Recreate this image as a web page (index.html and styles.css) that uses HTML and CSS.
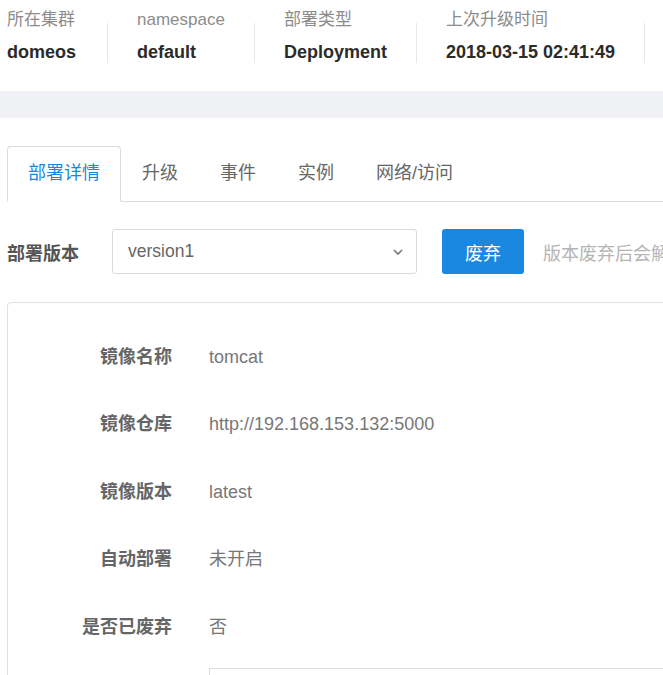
FILE: index.html
```html
<!DOCTYPE html>
<html lang="zh">
<head>
<meta charset="utf-8">
<title>部署详情</title>
<link rel="stylesheet" href="styles.css">
</head>
<body>
<div class="page">
  <div class="summary">
    <div class="stat">
      <div class="stat-label">所在集群</div>
      <div class="stat-value">domeos</div>
    </div>
    <span class="divider"></span>
    <div class="stat">
      <div class="stat-label">namespace</div>
      <div class="stat-value">default</div>
    </div>
    <span class="divider"></span>
    <div class="stat">
      <div class="stat-label">部署类型</div>
      <div class="stat-value">Deployment</div>
    </div>
    <span class="divider"></span>
    <div class="stat">
      <div class="stat-label">上次升级时间</div>
      <div class="stat-value">2018-03-15 02:41:49</div>
    </div>
    <span class="divider"></span>
  </div>

  <div class="band"></div>

  <div class="tabs">
    <div class="tab active">部署详情</div>
    <div class="tab">升级</div>
    <div class="tab">事件</div>
    <div class="tab">实例</div>
    <div class="tab">网络/访问</div>
  </div>

  <div class="version-row">
    <span class="version-label">部署版本</span>
    <div class="select">
      <span class="select-text">version1</span>
      <svg class="chevron" width="12" height="8" viewBox="0 0 12 8"><path d="M2 2 L6 6 L10 2" fill="none" stroke="#777" stroke-width="1.6"/></svg>
    </div>
    <button class="btn-primary">废弃</button>
    <span class="hint">版本废弃后会解除关联</span>
  </div>

  <div class="card">
    <div class="row"><span class="row-label">镜像名称</span><span class="row-value">tomcat</span></div>
    <div class="row"><span class="row-label">镜像仓库</span><span class="row-value">http://192.168.153.132:5000</span></div>
    <div class="row"><span class="row-label">镜像版本</span><span class="row-value">latest</span></div>
    <div class="row"><span class="row-label">自动部署</span><span class="row-value">未开启</span></div>
    <div class="row"><span class="row-label">是否已废弃</span><span class="row-value">否</span></div>
    <div class="box-row"><div class="box"></div></div>
  </div>
</div>
</body>
</html>
```

FILE: styles.css
```css
html, body {
  margin: 0;
  padding: 0;
  background: #fff;
  overflow: hidden;
}
body {
  font-family: "Liberation Sans", "Noto Sans CJK SC", sans-serif;
  font-size: 18px;
  color: #333;
}
.page {
  width: 663px;
  height: 675px;
  overflow: hidden;
}
.summary {
  display: flex;
  align-items: flex-start;
  padding: 8px 0 0 7px;
  height: 91px;
  box-sizing: border-box;
}
.stat {
  padding: 0 29px 0 29px;
}
.stat:first-child {
  padding: 0 31px 0 0;
}
.stat-label {
  color: #8c8c8c;
  font-size: 17px;
  line-height: 24px;
}
.stat-value {
  font-weight: bold;
  color: #2b2b2b;
  font-size: 18px;
  line-height: 24px;
  margin-top: 8px;
}
.divider {
  width: 1px;
  height: 40px;
  margin-top: 15px;
  background: #e6e6e6;
  flex: none;
}
.band {
  height: 27px;
  background: #f0f1f5;
}
.tabs {
  display: flex;
  margin: 28px 0 0 7px;
  border-bottom: 1px solid #dcdcdc;
  height: 55px;
}
.tab {
  padding: 0 21px;
  line-height: 55px;
  color: #666;
  font-size: 18px;
  height: 55px;
  box-sizing: border-box;
}
.tab.active {
  color: #1a87e0;
  border: 1px solid #dcdcdc;
  border-bottom: 1px solid #fff;
  border-radius: 4px 4px 0 0;
  background: #fff;
  height: 56px;
  line-height: 53px;
  padding: 0 20px;
}
.version-row {
  display: flex;
  align-items: center;
  margin: 27px 0 0 7px;
  height: 45px;
  white-space: nowrap;
}
.version-label {
  font-weight: bold;
  color: #555;
  width: 105px;
  flex: none;
}
.select {
  width: 305px;
  height: 45px;
  box-sizing: border-box;
  border: 1px solid #dadada;
  border-radius: 3px;
  display: flex;
  align-items: center;
  justify-content: space-between;
  padding: 0 12px 0 15px;
  flex: none;
  color: #666;
  font-size: 17.5px;
}
.chevron {
  display: block;
}
.btn-primary {
  margin-left: 25px;
  width: 82px;
  height: 45px;
  border: none;
  border-radius: 3px;
  background: #1a87e0;
  color: #fff;
  font-family: inherit;
  font-size: 18px;
  flex: none;
}
.hint {
  margin-left: 19px;
  color: #b5b5b5;
  font-size: 18px;
}
.card {
  margin: 28px 0 0 7px;
  width: 720px;
  border: 1px solid #e1e1e1;
  border-radius: 4px;
  padding-top: 20px;
  height: 420px;
  box-sizing: border-box;
}
.row {
  display: flex;
  align-items: center;
  height: 67.5px;
}
.row-label {
  width: 164px;
  text-align: right;
  font-weight: bold;
  color: #666;
  flex: none;
  line-height: 24px;
}
.row-value {
  margin-left: 37px;
  color: #777;
  line-height: 24px;
}
.box-row {
  padding: 7px 0 0 201px;
}
.box {
  width: 520px;
  height: 50px;
  border: 1px solid #ddd;
}
```
